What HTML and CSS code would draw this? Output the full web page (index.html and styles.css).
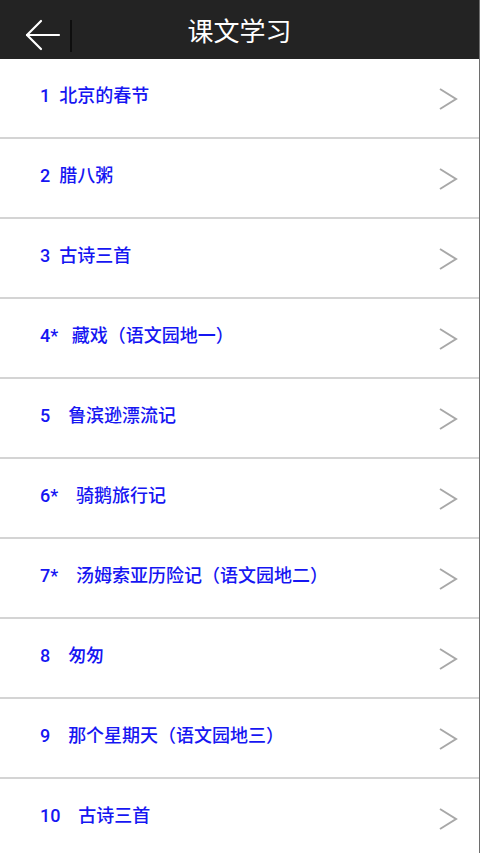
FILE: index.html
```html
<!DOCTYPE html>
<html lang="zh">
<head>
<meta charset="utf-8">
<title>课文学习</title>
<link rel="stylesheet" href="styles.css">
</head>
<body>
<div class="app">
  <header class="topbar">
    <div class="back">
      <svg class="back-icon" width="40" height="34" viewBox="0 0 40 34">
        <polyline points="17,3 3,17 17,31" fill="none" stroke="#ffffff" stroke-width="2.2" stroke-linecap="round" stroke-linejoin="round"/>
        <line x1="3" y1="17" x2="35" y2="17" stroke="#ffffff" stroke-width="2.2" stroke-linecap="round"/>
      </svg>
      <span class="divider"></span>
    </div>
    <h1 class="title">课文学习</h1>
  </header>
  <ul class="list">
    <li class="row"><span class="label">1  北京的春节</span><svg class="chev" width="20" height="24" viewBox="0 0 20 24"><polyline points="2,2 18,12 2,22" fill="none" stroke="#a8a8a8" stroke-width="2"/></svg></li>
    <li class="row"><span class="label">2  腊八粥</span><svg class="chev" width="20" height="24" viewBox="0 0 20 24"><polyline points="2,2 18,12 2,22" fill="none" stroke="#a8a8a8" stroke-width="2"/></svg></li>
    <li class="row"><span class="label">3  古诗三首</span><svg class="chev" width="20" height="24" viewBox="0 0 20 24"><polyline points="2,2 18,12 2,22" fill="none" stroke="#a8a8a8" stroke-width="2"/></svg></li>
    <li class="row"><span class="label">4*   藏戏（语文园地一）</span><svg class="chev" width="20" height="24" viewBox="0 0 20 24"><polyline points="2,2 18,12 2,22" fill="none" stroke="#a8a8a8" stroke-width="2"/></svg></li>
    <li class="row"><span class="label">5    鲁滨逊漂流记</span><svg class="chev" width="20" height="24" viewBox="0 0 20 24"><polyline points="2,2 18,12 2,22" fill="none" stroke="#a8a8a8" stroke-width="2"/></svg></li>
    <li class="row"><span class="label">6*    骑鹅旅行记</span><svg class="chev" width="20" height="24" viewBox="0 0 20 24"><polyline points="2,2 18,12 2,22" fill="none" stroke="#a8a8a8" stroke-width="2"/></svg></li>
    <li class="row"><span class="label">7*    汤姆索亚历险记（语文园地二）</span><svg class="chev" width="20" height="24" viewBox="0 0 20 24"><polyline points="2,2 18,12 2,22" fill="none" stroke="#a8a8a8" stroke-width="2"/></svg></li>
    <li class="row"><span class="label">8    匆匆</span><svg class="chev" width="20" height="24" viewBox="0 0 20 24"><polyline points="2,2 18,12 2,22" fill="none" stroke="#a8a8a8" stroke-width="2"/></svg></li>
    <li class="row"><span class="label">9    那个星期天（语文园地三）</span><svg class="chev" width="20" height="24" viewBox="0 0 20 24"><polyline points="2,2 18,12 2,22" fill="none" stroke="#a8a8a8" stroke-width="2"/></svg></li>
    <li class="row"><span class="label">10    古诗三首</span><svg class="chev" width="20" height="24" viewBox="0 0 20 24"><polyline points="2,2 18,12 2,22" fill="none" stroke="#a8a8a8" stroke-width="2"/></svg></li>
  </ul>
</div>
</body>
</html>
```
FILE: styles.css
```css
html, body {
  margin: 0;
  padding: 0;
  background: #ffffff;
}
body {
  font-family: Roboto, "Noto Sans CJK SC", sans-serif;
  width: 480px;
  height: 853px;
  overflow: hidden;
}
.app {
  width: 480px;
  height: 853px;
  display: flex;
  flex-direction: column;
  border-right: 1px solid #6e6e6e;
  box-sizing: border-box;
}
.topbar {
  height: 59px;
  flex: 0 0 59px;
  background: #232323;
  display: flex;
  align-items: center;
  position: relative;
}
.back {
  display: flex;
  align-items: center;
  padding-left: 24px;
  height: 100%;
}
.back-icon {
  display: block;
  margin-top: 10px;
}
.divider {
  width: 2px;
  height: 32px;
  background: #0e0e0e;
  margin-left: 6px;
  margin-top: 13px;
}
.title {
  position: absolute;
  left: 0;
  right: 0;
  top: 0;
  margin: 0;
  text-align: center;
  color: #ffffff;
  font-family: "Noto Sans CJK SC", sans-serif;
  font-weight: normal;
  font-size: 26px;
  line-height: 60px;
  pointer-events: none;
}
.list {
  list-style: none;
  margin: 0;
  padding: 0;
  flex: 1;
}
.row {
  height: 78px;
  border-bottom: 2px solid #d4d4d4;
  display: flex;
  align-items: center;
  justify-content: space-between;
  padding: 0 21px 0 40px;
}
.label {
  white-space: pre;
  color: #1616f2;
  font-size: 18px;
  font-weight: 500;
  margin-top: -9px;
}
.chev {
  display: block;
  margin-top: 2px;
}
```
